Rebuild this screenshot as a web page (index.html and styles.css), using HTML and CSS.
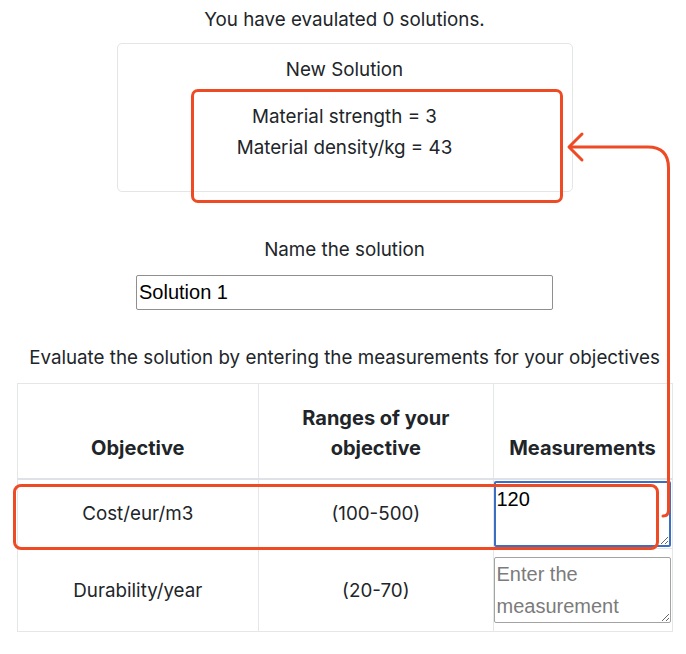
FILE: index.html
```html
<!DOCTYPE html>
<html lang="en">
<head>
<meta charset="utf-8">
<title>Evaluate solution</title>
<link rel="stylesheet" href="styles.css">
</head>
<body>
<main class="page">
  <p class="count">You have evaulated 0 solutions.</p>
  <section class="card">
    <h2 class="card-title">New Solution</h2>
    <p class="var">Material strength = 3</p>
    <p class="var">Material density/kg = 43</p>
  </section>
  <label class="name-label" for="sol-name">Name the solution</label>
  <input id="sol-name" class="name-input" type="text" value="Solution 1">
  <p class="instruct">Evaluate the solution by entering the measurements for your objectives</p>
  <table class="obj-table">
    <thead>
      <tr>
        <th class="c1">Objective</th>
        <th class="c2">Ranges of your objective</th>
        <th class="c3">Measurements</th>
      </tr>
    </thead>
    <tbody>
      <tr class="r1">
        <td>Cost/eur/m3</td>
        <td>(100-500)</td>
        <td class="mcell"><textarea class="meas focus">120</textarea></td>
      </tr>
      <tr class="r2">
        <td>Durability/year</td>
        <td>(20-70)</td>
        <td class="mcell"><textarea class="meas" placeholder="Enter the measurement"></textarea></td>
      </tr>
    </tbody>
  </table>

  <div class="note note-top"></div>
  <div class="note note-row"></div>
  <svg class="arrow" width="686" height="654" viewBox="0 0 686 654" aria-hidden="true">
    <path d="M663 516 Q668.5 516 668.5 510 L668.5 168 Q668.5 147 648 147 L570 147" fill="none" stroke="#ee4a24" stroke-width="3" stroke-linecap="round" stroke-linejoin="round"/>
    <path d="M582 134 L569 147 L582 160" fill="none" stroke="#ee4a24" stroke-width="3" stroke-linecap="round" stroke-linejoin="round"/>
  </svg>
</main>
</body>
</html>
```
FILE: styles.css
```css
* { box-sizing: border-box; }
html, body { margin: 0; padding: 0; background: #fff; }
body {
  font-family: Inter, "Liberation Sans", sans-serif;
  color: #212529;
  font-size: 18.8px;
  line-height: 27px;
}
.page {
  position: relative;
  width: 686px;
  height: 654px;
  padding-left: 3px;
  display: flex;
  flex-direction: column;
  align-items: center;
  overflow: hidden;
}
.count { margin: 6px 0 0; }
.card {
  margin-top: 10px;
  width: 456px;
  height: 149px;
  border: 1px solid #e4e5e7;
  border-radius: 5px;
  display: flex;
  flex-direction: column;
  align-items: center;
  padding-top: 12px;
}
.card-title { margin: 0 0 20px; font-size: 18.8px; font-weight: 400; line-height: 27px; }
.var { margin: 0 0 4px; }
.name-label { margin-top: 44px; display: block; }
.name-input {
  margin-top: 12px;
  width: 417px;
  height: 35px;
  border: 1px solid #8f8f8f;
  border-radius: 2px;
  font-family: "Liberation Sans", Arial, sans-serif;
  font-size: 20px;
  color: #000;
  padding: 0 2px;
}
.instruct { margin: 34px 0 0; }
.obj-table {
  margin-top: 12px;
  width: 656px;
  border-collapse: collapse;
  text-align: center;
}
.obj-table th, .obj-table td {
  border: 1px solid #e4e6e8;
  padding: 0 12px;
}
.obj-table th {
  font-weight: 700;
  font-size: 20px;
  vertical-align: bottom;
  height: 95px;
  padding-bottom: 15px;
  border-bottom: 2px solid #dee2e6;
  line-height: 30px;
}
.c1 { width: 242px; }
.c2 { width: 235px; }
.c3 { width: 179px; }
.obj-table td { vertical-align: middle; }
.r1 td { height: 70px; }
.r2 td { height: 83px; }
.obj-table td.mcell { padding: 1px 0; vertical-align: top; }
.r2 td.mcell { padding-top: 8px; }
.meas {
  display: block;
  width: 177px;
  height: 66px;
  margin: 0;
  border: 1px solid #a3a3a3;
  border-radius: 2px;
  font-family: "Liberation Sans", Arial, sans-serif;
  font-size: 20px;
  line-height: 32px;
  padding: 0 2px;
  color: #000;
  resize: vertical;
}
.meas::placeholder { color: #7b7b7b; }
.meas.focus { border: 2px solid #3a6fc4; padding: 0 1px; }
.note {
  position: absolute;
  border: 3px solid #ee4a24;
  border-radius: 7px;
  pointer-events: none;
}
.note-top { left: 191px; top: 89px; width: 372px; height: 114px; }
.note-row { left: 13px; top: 484px; width: 646px; height: 66px; border-radius: 8px; }
.arrow { position: absolute; left: 0; top: 0; pointer-events: none; }
```
